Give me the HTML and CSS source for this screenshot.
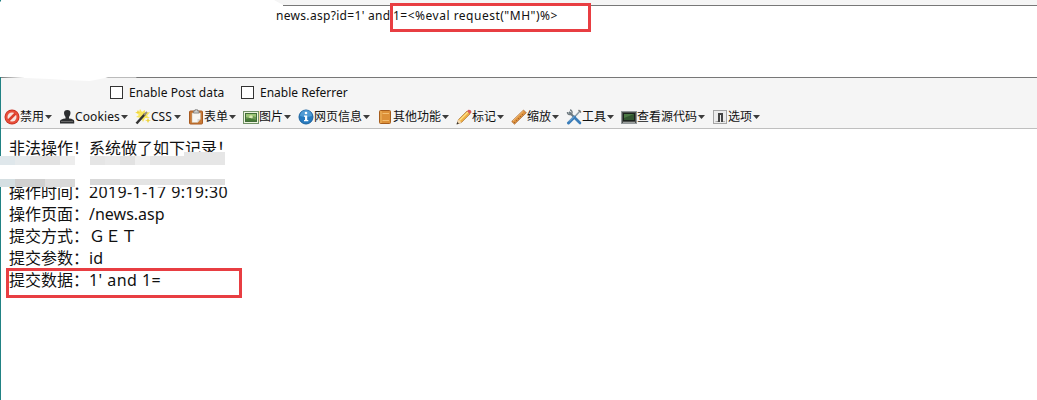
FILE: index.html
```html
<!DOCTYPE html>
<html lang="zh-CN">
<head>
<meta charset="utf-8">
<title>news.asp</title>
<link rel="stylesheet" href="styles.css">
</head>
<body>
<div class="window">
  <div class="url-panel">
    <svg class="erase" width="290" height="83" viewBox="0 0 290 83"><path fill="#fff" d="M0 2L2 0H274L283 5V30H290V76H138L136 77.500H108L100 79L90 81L65 80L50 79L0 77Z"/></svg>
    <div class="url"><span class="w-url">news.asp?id=1' and</span><span class="payload">1=&lt;%eval request("MH")%&gt;</span></div>
    <div class="mark mark-url"></div>
  </div>
  <div class="options">
    <label class="option"><span class="box"></span><span class="w-post">Enable Post data</span></label>
    <label class="option"><span class="box"></span><span class="w-ref">Enable Referrer</span></label>
  </div>
  <div class="toolbar">
    <div class="tool"><svg class="icon" viewBox="0 0 16 16"><circle cx="8" cy="8" r="7.500" fill="#c93222"/><circle cx="8" cy="8" r="6.600" fill="#e8503b"/><circle cx="8" cy="8" r="4.500" fill="#f7e5df"/><path d="M4.500 11.500L11.500 4.500" stroke="#dc402c" stroke-width="2.500"/></svg><span class="name w2">禁用</span><i class="arrow"></i></div>
    <div class="tool"><svg class="icon" viewBox="0 0 16 16"><path fill="#2d2f31" d="M5 4Q5 1 8.300 1T11.500 4Q11.500 6 10 8V9.500Q15 10 15.200 12V14.500H1V12Q1.500 10 6.500 9.500V8Q5 6 5 4Z"/><path stroke="#666" d="M2 12.500H14"/></svg><span class="name w-cookies">Cookies</span><i class="arrow"></i></div>
    <div class="tool"><svg class="icon" viewBox="0 0 16 16"><path fill="#f8e65c" d="M5 0L7 3L10 1L10 4L15 3L12 7L15 9L10 9L8 13L6 9L1 8L4 6L0 3L4 3Z"/><path d="M1.500 14.500L10 5" stroke="#343432" stroke-width="2.500"/><path d="M9 6L12 3" stroke="#9b917a" stroke-width="2"/><path fill="#efd33f" d="M13 9l1 2 2 0-2 1-1 2-1-2-2-1 2 0zM3 1l1 2 1 1-2 0-2 0 1-1z"/></svg><span class="name w-css">CSS</span><i class="arrow"></i></div>
    <div class="tool"><svg class="icon" viewBox="0 0 16 16"><rect x="1.500" y="2" width="13" height="13" rx="1" fill="#c97a36" stroke="#a85a20"/><path fill="#f8f7f2" stroke="#c7b49c" stroke-width=".5" d="M4 4H12.500V10L9.500 13.500H4Z"/><path fill="#d6d6d6" d="M12.500 10H9.500V13.500Z"/><path fill="#cfcfca" stroke="#777" stroke-width=".7" d="M5.500 4V2H7V.7H9.500V2H11V4Z"/></svg><span class="name w2">表单</span><i class="arrow"></i></div>
    <div class="tool"><svg class="icon" viewBox="0 0 16 16"><rect x=".5" y="2.500" width="15" height="12" fill="#edf4df" stroke="#729268"/><rect x="2.500" y="4.500" width="11" height="8" fill="#6b9854" stroke="#426d38"/><path fill="#9ac474" d="M3 5H13V8L10 7L7 9L3 8Z"/><circle cx="8" cy="8" r="1.800" fill="#dceab5"/><path fill="#477b36" d="M3 10L7 9L13 11V12H3Z"/></svg><span class="name w2">图片</span><i class="arrow"></i></div>
    <div class="tool"><svg class="icon" viewBox="0 0 16 16"><circle cx="8" cy="8" r="7" fill="#277abf" stroke="#19619d"/><path fill="#61aade" opacity=".7" d="M2 7A6 6 0 0 1 14 7Q8 9 2 7Z"/><circle cx="8" cy="4" r="1.300" fill="#fff"/><path fill="#fff" d="M6 6.500H9.200V11H10.300V12.200H6V11H7V7.700H6Z"/></svg><span class="name w4">网页信息</span><i class="arrow"></i></div>
    <div class="tool"><svg class="icon" viewBox="0 0 16 16"><rect x="2.500" y="1.500" width="11" height="13" rx="1" fill="#dc9038" stroke="#a65d1d"/><path d="M4 2V14" stroke="#efb861"/><path d="M5.500 4.500H12M5.500 11.500H12" stroke="#f3bd70"/></svg><span class="name w4">其他功能</span><i class="arrow"></i></div>
    <div class="tool"><svg class="icon" viewBox="0 0 16 16"><path fill="#edad43" stroke="#9f6a31" stroke-width=".6" d="M1 15L2.500 10.500L11 2L14 5L5.500 13.500Z"/><path stroke="#ffe28a" stroke-width="1.200" d="M3.500 11.500L12 3"/><path fill="#d95b5a" d="M11 2L12.500.7Q15.500.5 15.400 3.500L14 5Z"/><path fill="#f5dab0" d="M1 15L2.500 10.500L5.500 13.500Z"/><path fill="#333" d="M.5 15.500L1.300 13L3 14.500Z"/></svg><span class="name w2">标记</span><i class="arrow"></i></div>
    <div class="tool"><svg class="icon" viewBox="0 0 16 16"><path fill="#dd913d" stroke="#a4602a" stroke-width=".7" d="M.7 12.500L12.500 1L15.300 3.800L3.500 15.200Z"/><path stroke="#f3bc72" d="M2 12L12.500 2"/><path stroke="#925123" stroke-width=".7" d="M4 14L3 13M6 12L5 11M8 10L7 9M10 8L9 7M12 6L11 5"/></svg><span class="name w2">缩放</span><i class="arrow"></i></div>
    <div class="tool"><svg class="icon" viewBox="0 0 16 16"><path d="M3 3L13 13" stroke="#687880" stroke-width="2"/><path d="M1.500 3A2.300 2.300 0 1 0 4 1" fill="none" stroke="#717b80" stroke-width="1.400"/><path d="M14.500 1.500L9 7.500" stroke="#8d9ba3" stroke-width="1.500"/><path d="M8.500 8L2.500 14" stroke="#397cb9" stroke-width="3" stroke-linecap="round"/><path d="M9.500 9.500L14 14" stroke="#397cb9" stroke-width="2.600" stroke-linecap="round"/><path d="M8 7.500L3 12.500" stroke="#85b4da"/><path d="M12.500 1L15 3.500" stroke="#777" stroke-width="1.200"/></svg><span class="name w2">工具</span><i class="arrow"></i></div>
    <div class="tool"><svg class="icon" viewBox="0 0 16 16"><rect x=".5" y="2.500" width="15" height="12" fill="#4d514f" stroke="#92989a"/><rect x="2.500" y="4.500" width="11" height="7" fill="#31552f" stroke="#1c231e"/><path fill="#4c7945" d="M3 5H13L3 9Z"/><path stroke="#9da19f" d="M2 13.500H14"/></svg><span class="name w5">查看源代码</span><i class="arrow"></i></div>
    <div class="tool"><svg class="icon" viewBox="0 0 16 16"><rect x="1.500" y="1.500" width="13" height="13" fill="#ececec" stroke="#a5a5a5"/><path fill="#444" d="M6 4H11V13H9V6H8V13H5.500V12H6Z"/><path stroke="#999" stroke-width=".7" d="M3.500 12.500H5.500M11 12.500H13"/></svg><span class="name w2">选项</span><i class="arrow"></i></div>
  </div>
  <main class="page">
    <p class="line">非法操作！系统做了如下记录！</p>
    <p class="line"></p>
    <p class="line">操作时间：<span class="w-time">2019-1-17 9:19:30</span></p>
    <p class="line">操作页面：<span class="w-path">/news.asp</span></p>
    <p class="line">提交方式：ＧＥＴ</p>
    <p class="line">提交参数：<span>id</span></p>
    <p class="line">提交数据：<span class="w-data">1' and 1=</span></p>
    <div class="mosaic"><div class="strip strip-a"></div><div class="strip strip-c"></div><div class="strip strip-b"></div></div>
    <div class="mark mark-data"></div>
  </main>
</div>
</body>
</html>
```
FILE: styles.css
```css
* { box-sizing: border-box; }
body {
  margin: 0;
  background: #fff;
  color: #111;
  font-family: "Noto Sans", "Noto Sans CJK SC", sans-serif;
}
.window {
  height: 400px;
  overflow: hidden;
  background: linear-gradient(90deg, #218284 1px, #f5f5f5 1px);
  padding: 5px 0 0 1px;
}
.url-panel {
  position: relative;
  height: 73px;
  background: #fff;
  border-top: 1px solid #777;
  border-bottom: 1px solid #777;
}
.erase { position: absolute; left: -1px; top: -6px; }
.url {
  position: relative;
  display: flex;
  padding-left: 275px;
  font-size: 12px;
  line-height: 20px;
  white-space: pre;
}
.w-url { width: 117px; letter-spacing: 0.31px; }
.payload { letter-spacing: 0.5px; }
.mark { position: absolute; border: 3px solid #e83e42; }
.mark-url { left: 389px; top: -3px; width: 201px; height: 29px; }
.options {
  display: flex;
  gap: 16px;
  height: 29px;
  padding: 0 0 0 109px;
  align-items: center;
  font-size: 12px;
  white-space: nowrap;
}
.option { display: flex; align-items: center; gap: 6px; }
.box { width: 13px; height: 13px; border: 1px solid #333; background: #fff; }
.w-post { width: 96px; letter-spacing: 0.08px; }
.w-ref { width: 90px; }
.toolbar {
  display: flex;
  gap: 7px;
  height: 22px;
  padding: 0 0 1px 3px;
  align-items: center;
  border-bottom: 1px solid #bfbfbf;
  font-size: 12px;
}
.tool { display: flex; align-items: center; height: 20px; }
.icon { width: 16px; height: 16px; flex: none; }
.name { white-space: nowrap; line-height: 18px; }
.w2 { width: 24px; }
.w4 { width: 48px; }
.w5 { width: 60px; }
.w-cookies { width: 45px; letter-spacing: 0.12px; }
.w-css { width: 22px; }
.arrow {
  width: 7px;
  height: 4px;
  margin-left: 1px;
  background: #3c3c3c;
  clip-path: polygon(0 0, 100% 0, 50% 100%);
}
.page {
  position: relative;
  height: 271px;
  padding: 8px 0 0 8px;
  background: #fff;
  font-size: 16px;
}
.page::before {
  content: "";
  position: absolute;
  left: -1px;
  top: 0;
  width: 1px;
  height: 271px;
  background: #218284;
}
.line { margin: 0; height: 22px; line-height: 22px; white-space: pre; }
.w-time { letter-spacing: 0.36px; }
.w-data { letter-spacing: 0.45px; }
.mosaic {
  position: absolute;
  left: -1px;
  top: 27px;
  width: 226px;
  height: 31px;
  background: #fff;
}
.strip {
  position: absolute;
  left: 0;
  width: 225px;
}
.strip-a {
  top: 0;
  height: 9px;
  background: linear-gradient(90deg, #dfe7eb 0 15px, #e6eaec 15px 30px, #e2e2e2 30px 60px, #ededed 60px 75px, #fff 75px 90px, #e5e5e5 90px 105px, #e9e9e9 105px 120px, #e2e2e2 120px 135px, #efefef 135px 150px, #e6e6e6 150px);
}
.strip-c {
  left: 184px;
  top: -4px;
  width: 41px;
  height: 13px;
  background: #e6e6e6;
}
.strip-b {
  bottom: 0;
  height: 8px;
  background: linear-gradient(#fff, #fff) 90px 6px / 136px 2px no-repeat, linear-gradient(90deg, #d5dfe2 0 15px, #d0d0d0 15px 45px, #dedede 45px 60px, #d8d8d8 60px 75px, #fff 75px 90px, #d9d9d9 90px 120px, #e4e4e4 120px 180px, #dedede 180px);
}
.mark-data { left: 5px; top: 139px; width: 236px; height: 30px; }
```
